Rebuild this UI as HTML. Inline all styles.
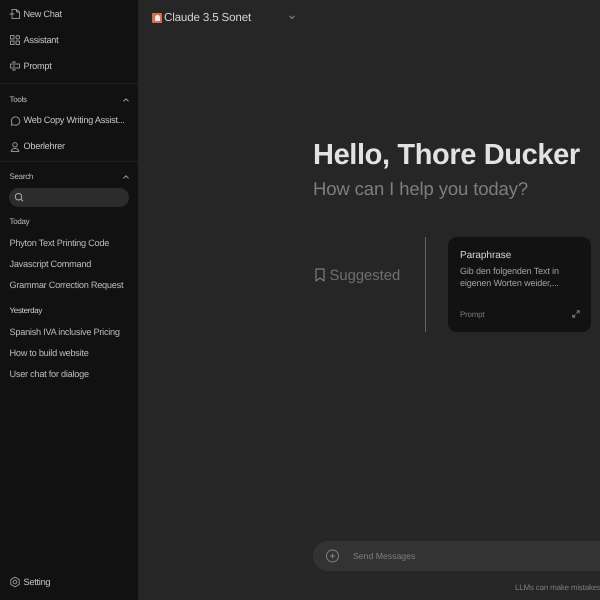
<!DOCTYPE html>
<html><head><meta charset="utf-8">
<style>
html,body{margin:0;padding:0;width:600px;height:600px;overflow:hidden;background:#262626;font-family:"Liberation Sans",sans-serif;text-rendering:geometricPrecision;-webkit-font-smoothing:antialiased}
.t{position:absolute;white-space:nowrap;line-height:14px}
.s{font-size:9.2px;color:#c6c6c6;letter-spacing:-.26px}
.h{font-size:8px;color:#bdbdbd;letter-spacing:-.3px}
svg{position:absolute;fill:none;stroke-linecap:round;stroke-linejoin:round}
.i{stroke:#929292;stroke-width:1}
</style></head><body>
<div style="position:absolute;left:0;top:0;width:138px;height:600px;background:#111111"></div>
<div style="position:absolute;left:0;top:83px;width:138px;height:1px;background:#1f1f1f"></div>
<div style="position:absolute;left:0;top:161px;width:138px;height:1px;background:#1f1f1f"></div>

<svg class="i" style="left:9px;top:8px" width="12" height="12" viewBox="0 0 12 12"><path d="M3 3V1.500h4.500L10.500 4v6.500H3V9"/><path d="M7.500 1.500V4h3"/><path d="M1 6h4M3 4v4"/></svg>
<div class="t s" style="left:23.500px;top:7px">New Chat</div>
<svg class="i" style="left:9px;top:34px" width="12" height="12" viewBox="0 0 12 12"><rect x="1.500" y="1.500" width="3.500" height="3.500"/><rect x="7" y="1.500" width="3.500" height="3.500" rx="1.500"/><rect x="1.500" y="7" width="3.500" height="3.500"/><rect x="7" y="7" width="3.500" height="3.500"/></svg>
<div class="t s" style="left:23.500px;top:33px">Assistant</div>
<svg class="i" style="left:9px;top:60px" width="12" height="12" viewBox="0 0 12 12"><path d="M5 2v8M3.500 2h3M3.500 10h3"/><path d="M3.500 4H1.500v4h2M6.500 4h4v4h-4"/></svg>
<div class="t s" style="left:23.500px;top:59px">Prompt</div>

<div class="t h" style="left:9.500px;top:93px">Tools</div>
<svg style="left:123px;top:98px;stroke:#a0a0a0;stroke-width:1" width="6" height="4" viewBox="0 0 6 4"><path d="M.8 3L3 .8L5.200 3"/></svg>
<svg class="i" style="left:8.500px;top:115px" width="12" height="12" viewBox="0 0 12 12"><path d="M2.200 10.300l.7-2.200A4.200 4.200 0 1 1 4.500 9.700z"/></svg>
<div class="t s" style="left:23.500px;top:113px">Web Copy Writing Assist...</div>
<svg class="i" style="left:8.500px;top:141px" width="12" height="12" viewBox="0 0 12 12"><circle cx="6" cy="3.800" r="2.200"/><path d="M2.200 10.500c.3-2 1.800-3 3.800-3s3.500 1 3.800 3z"/></svg>
<div class="t s" style="left:23.500px;top:139px">Oberlehrer</div>

<div class="t h" style="left:9.500px;top:170px">Search</div>
<svg style="left:123px;top:175px;stroke:#a0a0a0;stroke-width:1" width="6" height="4" viewBox="0 0 6 4"><path d="M.8 3L3 .8L5.200 3"/></svg>
<div style="position:absolute;left:9px;top:187.500px;width:120px;height:19px;border-radius:10px;background:#2c2c2c"></div>
<svg style="left:14px;top:192px;stroke:#b8b8b8;stroke-width:.9" width="10" height="10" viewBox="0 0 10 10"><circle cx="4.500" cy="4.700" r="3.300"/><path d="M7 7.300l1.700 1.700"/></svg>

<div class="t h" style="left:9.500px;top:215px">Today</div>
<div class="t s" style="left:9.500px;top:236px;color:#bcbcbc">Phyton Text Printing Code</div>
<div class="t s" style="left:9.500px;top:257px;color:#bcbcbc">Javascript Command</div>
<div class="t s" style="left:9.500px;top:278px;color:#bcbcbc">Grammar Correction Request</div>
<div class="t h" style="left:9.500px;top:304px;color:#d0d0d0">Yesterday</div>
<div class="t s" style="left:9.500px;top:325px;color:#bcbcbc">Spanish IVA inclusive Pricing</div>
<div class="t s" style="left:9.500px;top:346px;color:#bcbcbc">How to build website</div>
<div class="t s" style="left:9.500px;top:367px;color:#bcbcbc">User chat for dialoge</div>

<svg class="i" style="left:8.500px;top:576px" width="12" height="12" viewBox="0 0 12 12"><path d="M6 1.200l4.200 2.400v4.800L6 10.800 1.800 8.400V3.600z"/><circle cx="6" cy="6" r="1.800"/></svg>
<div class="t s" style="left:23.500px;top:575px">Setting</div>

<div style="position:absolute;left:152px;top:13px;width:10px;height:10px;background:#d4704c;border-radius:1px"></div>
<div style="position:absolute;left:154.500px;top:14.500px;width:5px;height:6px;background:#eee;border-radius:2.500px 2.500px 1px 1px"></div>
<div class="t" style="left:164px;top:11px;font-size:11.600px;color:#d2d2d2;letter-spacing:-.16px">Claude 3.5 Sonet</div>
<svg style="left:289px;top:15px;stroke:#8c8c8c;stroke-width:1" width="6" height="5" viewBox="0 0 6 5"><path d="M.8 1.200L3 3.500L5.200 1.200"/></svg>

<div class="t" style="left:313px;top:138px;font-size:29px;line-height:34px;font-weight:bold;color:#e2e2e2;letter-spacing:-.38px">Hello, Thore Ducker</div>
<div class="t" style="left:313px;top:178px;font-size:18.500px;line-height:22px;color:#7e7e7e;letter-spacing:-.12px">How can I help you today?</div>

<svg style="left:314px;top:268px;stroke:#7c7c7c;stroke-width:1.200" width="12" height="14" viewBox="0 0 12 14"><path d="M2 1h8v12L6 10l-4 3z"/></svg>
<div class="t" style="left:329.500px;top:267px;font-size:14.800px;line-height:18px;color:#707070">Suggested</div>
<div style="position:absolute;left:424.500px;top:237px;width:1px;height:95px;background:#666"></div>

<div style="position:absolute;left:448px;top:237px;width:143px;height:95px;border-radius:9px;background:#121212"></div>
<div class="t" style="left:460px;top:249px;font-size:10px;color:#d8d8d8;letter-spacing:-.05px">Paraphrase</div>
<div class="t" style="left:460px;top:264px;font-size:9px;color:#a2a2a2;letter-spacing:-.12px">Gib den folgenden Text in</div>
<div class="t" style="left:460px;top:276px;font-size:9px;color:#a2a2a2;letter-spacing:-.12px">eigenen Worten weider,...</div>
<div class="t" style="left:460px;top:308px;font-size:8px;color:#777;letter-spacing:-.25px">Prompt</div>
<svg style="left:572px;top:310px;stroke:#8a8a8a;stroke-width:.9" width="8" height="8" viewBox="0 0 8 8"><path d="M4.800 3.200L7.200.8M5 .8h2.200V3M3.200 4.800L.8 7.200M.8 5v2.200H3"/></svg>

<div style="position:absolute;left:313px;top:541px;width:320px;height:30px;border-radius:15px;background:#333333"></div>
<svg style="left:326px;top:549px;stroke:#858585;stroke-width:.9" width="13" height="14" viewBox="0 0 13 14"><circle cx="6.500" cy="7" r="6"/><path d="M6.500 4.800v4.400M4.300 7h4.400"/></svg>
<div class="t" style="left:353px;top:549px;font-size:8.700px;color:#7e7e7e">Send Messages</div>
<div class="t" style="left:515px;top:581px;font-size:8px;color:#7e7e7e;letter-spacing:-.2px">LLMs can make mistakes.</div>
</body></html>
